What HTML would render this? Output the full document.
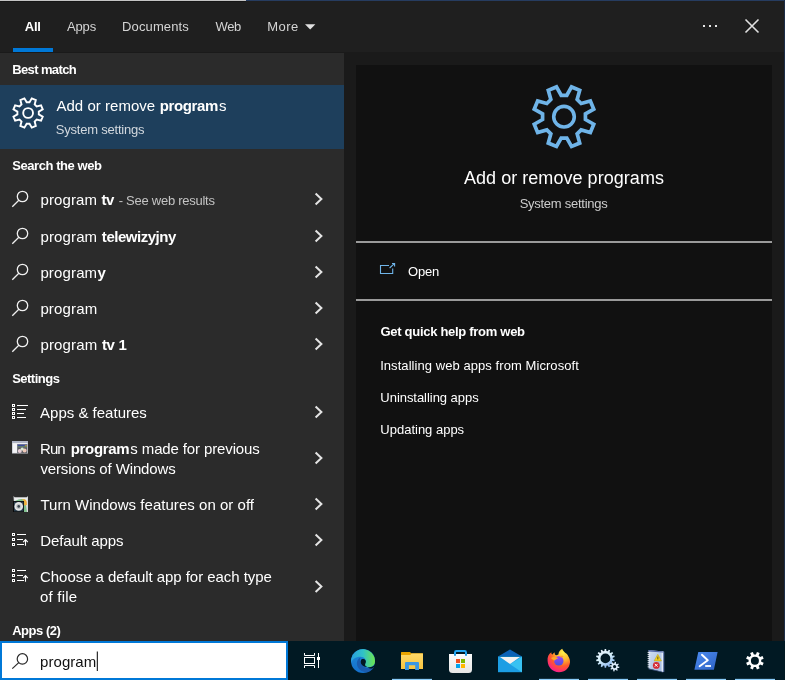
<!DOCTYPE html>
<html lang="en"><head><meta charset="utf-8"><title>Search - program</title>
<style>
html,body{margin:0;padding:0;background:#1a1a1a;}
body{width:785px;height:680px;overflow:hidden;position:relative;font-family:"Liberation Sans", sans-serif;}
.b{position:absolute;}
.t{position:absolute;line-height:20px;white-space:nowrap;}
#tx{position:absolute;left:0;top:0;width:785px;height:680px;will-change:transform;}
.t b{font-weight:700;}
svg{position:absolute;left:0;top:0;}
</style></head><body>
<div class="b" style="left:0;top:0;width:785px;height:641px;background:#1a1a1a"></div>
<div class="b" style="left:0;top:0;width:785px;height:52px;background:#1f1f1f"></div>
<div class="b" style="left:0;top:0;width:246px;height:1px;background:#c4c4c4"></div>
<div class="b" style="left:0;top:1px;width:246px;height:1px;background:#161616"></div>
<div class="b" style="left:246px;top:0;width:539px;height:1px;background:#263c60"></div>
<div class="b" style="left:784px;top:0;width:1px;height:641px;background:#1c2c46"></div>
<div class="b" style="left:13px;top:48px;width:40px;height:4px;background:#0078d7"></div>
<div class="b" style="left:0;top:53px;width:344px;height:588px;background:#2b2b2b"></div>
<div class="b" style="left:0;top:85px;width:344px;height:64px;background:#1e3f5c"></div>
<div class="b" style="left:356px;top:65px;width:416px;height:576px;background:#111111"></div>
<div class="b" style="left:356px;top:241px;width:416px;height:2px;background:#9a9a9a"></div>
<div class="b" style="left:356px;top:299px;width:416px;height:2px;background:#9a9a9a"></div>
<div class="b" style="left:0;top:641px;width:785px;height:39px;background:#011923"></div>
<div class="b" style="left:0;top:641px;width:284px;height:35px;background:#ffffff;border:2px solid #0078d7"></div>
<div id="tx">
<div class="t" style="left:24.85px;top:16.50px;font-size:13px;color:#ffffff"><span class="s" id="t_all" style="letter-spacing:-0.334px;font-weight:700">All</span></div>
<div class="t" style="left:66.90px;top:16.50px;font-size:13px;color:#d4d4d4"><span class="s" id="t_apps" style="letter-spacing:-0.114px">Apps</span></div>
<div class="t" style="left:121.99px;top:16.50px;font-size:13px;color:#d4d4d4"><span class="s" id="t_docs" style="letter-spacing:0.141px">Documents</span></div>
<div class="t" style="left:215.52px;top:16.50px;font-size:13px;color:#d4d4d4"><span class="s" id="t_web" style="letter-spacing:-0.397px">Web</span></div>
<div class="t" style="left:267.18px;top:16.50px;font-size:13px;color:#d4d4d4"><span class="s" id="t_more" style="letter-spacing:0.479px">More</span></div>
<div class="t" style="left:12.27px;top:59.50px;font-size:13px;color:#ffffff"><span class="s" id="t_best" style="letter-spacing:-0.630px;font-weight:700">Best match</span></div>
<div class="t" style="left:56.41px;top:95.80px;font-size:15px;color:#ffffff"><span class="s" id="t_sel1a" style="letter-spacing:0.030px">Add or remove</span> <span class="s" id="t_sel1b" style="letter-spacing:-0.347px;font-weight:700;margin-left:0.30px">program</span><span class="s" id="t_sel1c" style="letter-spacing:0.000px;margin-left:1.03px">s</span></div>
<div class="t" style="left:55.87px;top:119.50px;font-size:13px;color:#d2d8de"><span class="s" id="t_sel2" style="letter-spacing:-0.219px">System settings</span></div>
<div class="t" style="left:12.31px;top:155.50px;font-size:13px;color:#ffffff"><span class="s" id="t_sweb" style="letter-spacing:-0.446px;font-weight:700">Search the web</span></div>
<div class="t" style="left:40.46px;top:189.80px;font-size:15px;color:#ffffff"><span class="s" id="t_r1" style="letter-spacing:0.117px">program</span> <span class="s" id="t_r1t" style="letter-spacing:-0.598px;font-weight:700;margin-left:0.27px">tv</span> <span class="s" id="t_r1b" style="letter-spacing:-0.256px;margin-left:0.74px;font-size:13px;color:#c4c4c4">- See web results</span></div>
<div class="t" style="left:40.46px;top:226.80px;font-size:15px;color:#ffffff"><span class="s" id="t_r2" style="letter-spacing:0.133px">program</span> <span class="s" id="t_r2t" style="letter-spacing:-0.477px;font-weight:700;margin-left:0.44px">telewizyjny</span></div>
<div class="t" style="left:40.39px;top:262.80px;font-size:15px;color:#ffffff"><span class="s" id="t_r3" style="letter-spacing:0.148px">program</span><span class="s" id="t_r3t" style="letter-spacing:0.000px;font-weight:700;margin-left:0.17px">y</span></div>
<div class="t" style="left:40.39px;top:298.80px;font-size:15px;color:#ffffff"><span class="s" id="t_r4" style="letter-spacing:0.149px">program</span></div>
<div class="t" style="left:40.39px;top:334.80px;font-size:15px;color:#ffffff"><span class="s" id="t_r5" style="letter-spacing:0.161px">program</span> <span class="s" id="t_r5t" style="letter-spacing:-0.466px;font-weight:700;margin-left:0.49px">tv</span> <span class="s" id="t_r5u" style="letter-spacing:0.000px;font-weight:700;margin-left:-0.08px">1</span></div>
<div class="t" style="left:12.14px;top:368.50px;font-size:13px;color:#ffffff"><span class="s" id="t_set" style="letter-spacing:-0.496px;font-weight:700">Settings</span></div>
<div class="t" style="left:40.07px;top:402.80px;font-size:15px;color:#ffffff"><span class="s" id="t_s1" style="letter-spacing:0.002px">Apps &amp; features</span></div>
<div class="t" style="left:40.12px;top:438.80px;font-size:15px;color:#ffffff"><span class="s" id="t_s2a" style="letter-spacing:-0.995px">Run</span> <span class="s" id="t_s2p" style="letter-spacing:-0.325px;font-weight:700;margin-left:1.94px">program</span><span class="s" id="t_s2r" style="letter-spacing:-0.127px;margin-left:1.02px">s made for previous</span></div>
<div class="t" style="left:40.39px;top:458.80px;font-size:15px;color:#ffffff"><span class="s" id="t_s2b" style="letter-spacing:-0.120px">versions of Windows</span></div>
<div class="t" style="left:40.45px;top:494.80px;font-size:15px;color:#ffffff"><span class="s" id="t_s3" style="letter-spacing:0.033px">Turn Windows features on or off</span></div>
<div class="t" style="left:40.20px;top:530.80px;font-size:15px;color:#ffffff"><span class="s" id="t_s4" style="letter-spacing:-0.091px">Default apps</span></div>
<div class="t" style="left:40.06px;top:566.80px;font-size:15px;color:#ffffff"><span class="s" id="t_s5a" style="letter-spacing:-0.051px">Choose a default app for each type</span></div>
<div class="t" style="left:40.02px;top:586.80px;font-size:15px;color:#ffffff"><span class="s" id="t_s5b" style="letter-spacing:0.203px">of file</span></div>
<div class="t" style="left:12.17px;top:620.50px;font-size:13px;color:#ffffff"><span class="s" id="t_apps2" style="letter-spacing:-0.461px;font-weight:700">Apps (2)</span></div>
<div class="t" style="left:463.95px;top:167.76px;font-size:18px;color:#ffffff"><span class="s" id="t_title" style="letter-spacing:0.044px">Add or remove programs</span></div>
<div class="t" style="left:519.64px;top:193.50px;font-size:13px;color:#cccccc"><span class="s" id="t_sub" style="letter-spacing:-0.262px">System settings</span></div>
<div class="t" style="left:408.03px;top:261.50px;font-size:13px;color:#ffffff"><span class="s" id="t_open" style="letter-spacing:-0.163px">Open</span></div>
<div class="t" style="left:380.46px;top:321.50px;font-size:13px;color:#ffffff"><span class="s" id="t_help" style="letter-spacing:-0.290px;font-weight:700">Get quick help from web</span></div>
<div class="t" style="left:380.13px;top:355.50px;font-size:13px;color:#ffffff"><span class="s" id="t_h1" style="letter-spacing:0.065px">Installing web apps from Microsoft</span></div>
<div class="t" style="left:380.37px;top:387.50px;font-size:13px;color:#ffffff"><span class="s" id="t_h2" style="letter-spacing:-0.045px">Uninstalling apps</span></div>
<div class="t" style="left:380.37px;top:419.50px;font-size:13px;color:#ffffff"><span class="s" id="t_h3" style="letter-spacing:-0.007px">Updating apps</span></div>
<div class="t" style="left:40.03px;top:651.80px;font-size:15px;color:#111111"><span class="s" id="t_q" style="letter-spacing:0.068px">program</span></div>
</div>
<svg width="785" height="680" viewBox="0 0 785 680">
<path d="M305 24.3 H315.4 L310.2 29.5 Z" fill="#e0e0e0"/>
<rect x="703" y="25" width="2" height="2" fill="#e6e6e6"/>
<rect x="709" y="25" width="2" height="2" fill="#e6e6e6"/>
<rect x="715" y="25" width="2" height="2" fill="#e6e6e6"/>
<path d="M745.5 19.5 L758.5 32.5 M758.5 19.5 L745.5 32.5" stroke="#e0e0e0" stroke-width="1.6" fill="none"/>
<path d="M29.51 102.29 L31.80 98.36 L35.83 100.03 L34.67 104.43 L36.67 106.43 L41.07 105.27 L42.74 109.30 L38.81 111.59 L38.81 114.41 L42.74 116.70 L41.07 120.73 L36.67 119.57 L34.67 121.57 L35.83 125.97 L31.80 127.64 L29.51 123.71 L26.69 123.71 L24.40 127.64 L20.37 125.97 L21.53 121.57 L19.53 119.57 L15.13 120.73 L13.46 116.70 L17.39 114.41 L17.39 111.59 L13.46 109.30 L15.13 105.27 L19.53 106.43 L21.53 104.43 L20.37 100.03 L24.40 98.36 L26.69 102.29 Z" fill="none" stroke="#fff" stroke-width="1.9" stroke-linejoin="miter"/>
<circle cx="28.1" cy="113" r="4.9" fill="none" stroke="#fff" stroke-width="1.9"/>
<circle cx="22.50" cy="196.50" r="5.20" fill="none" stroke="#f0f0f0" stroke-width="1.30"/><path d="M18.82 200.18 L12.30 206.70" stroke="#f0f0f0" stroke-width="1.30" stroke-linecap="butt" fill="none"/>
<path d="M315.6 193.5 L321.4 199.0 L315.6 204.5" fill="none" stroke="#e4e4e4" stroke-width="2" stroke-linejoin="miter"/>
<circle cx="22.50" cy="233.50" r="5.20" fill="none" stroke="#f0f0f0" stroke-width="1.30"/><path d="M18.82 237.18 L12.30 243.70" stroke="#f0f0f0" stroke-width="1.30" stroke-linecap="butt" fill="none"/>
<path d="M315.6 230.5 L321.4 236.0 L315.6 241.5" fill="none" stroke="#e4e4e4" stroke-width="2" stroke-linejoin="miter"/>
<circle cx="22.50" cy="269.50" r="5.20" fill="none" stroke="#f0f0f0" stroke-width="1.30"/><path d="M18.82 273.18 L12.30 279.70" stroke="#f0f0f0" stroke-width="1.30" stroke-linecap="butt" fill="none"/>
<path d="M315.6 266.5 L321.4 272.0 L315.6 277.5" fill="none" stroke="#e4e4e4" stroke-width="2" stroke-linejoin="miter"/>
<circle cx="22.50" cy="305.50" r="5.20" fill="none" stroke="#f0f0f0" stroke-width="1.30"/><path d="M18.82 309.18 L12.30 315.70" stroke="#f0f0f0" stroke-width="1.30" stroke-linecap="butt" fill="none"/>
<path d="M315.6 302.5 L321.4 308.0 L315.6 313.5" fill="none" stroke="#e4e4e4" stroke-width="2" stroke-linejoin="miter"/>
<circle cx="22.50" cy="341.50" r="5.20" fill="none" stroke="#f0f0f0" stroke-width="1.30"/><path d="M18.82 345.18 L12.30 351.70" stroke="#f0f0f0" stroke-width="1.30" stroke-linecap="butt" fill="none"/>
<path d="M315.6 338.5 L321.4 344.0 L315.6 349.5" fill="none" stroke="#e4e4e4" stroke-width="2" stroke-linejoin="miter"/>
<path d="M315.6 406.5 L321.4 412.0 L315.6 417.5" fill="none" stroke="#e4e4e4" stroke-width="2" stroke-linejoin="miter"/>
<path d="M315.6 452.5 L321.4 458.0 L315.6 463.5" fill="none" stroke="#e4e4e4" stroke-width="2" stroke-linejoin="miter"/>
<path d="M315.6 498.5 L321.4 504.0 L315.6 509.5" fill="none" stroke="#e4e4e4" stroke-width="2" stroke-linejoin="miter"/>
<path d="M315.6 534.5 L321.4 540.0 L315.6 545.5" fill="none" stroke="#e4e4e4" stroke-width="2" stroke-linejoin="miter"/>
<path d="M315.6 581.0 L321.4 586.5 L315.6 592.0" fill="none" stroke="#e4e4e4" stroke-width="2" stroke-linejoin="miter"/>
<rect x="12.5" y="404.5" width="2" height="2" fill="none" stroke="#fff" stroke-width="1"/>
<rect x="17" y="405.0" width="11" height="1" fill="#fff"/>
<rect x="12.5" y="408.5" width="2" height="2" fill="none" stroke="#fff" stroke-width="1"/>
<rect x="17" y="409.0" width="9" height="1" fill="#fff"/>
<rect x="12.5" y="412.5" width="2" height="2" fill="none" stroke="#fff" stroke-width="1"/>
<rect x="17" y="413.0" width="7" height="1" fill="#fff"/>
<rect x="12.5" y="416.5" width="2" height="2" fill="none" stroke="#fff" stroke-width="1"/>
<rect x="17" y="417.0" width="9" height="1" fill="#fff"/>
<rect x="12" y="441" width="16" height="12.5" fill="#c9ccd4"/>
<rect x="12.8" y="443.2" width="14.4" height="9.6" fill="#f4f4f6"/>
<rect x="12" y="441" width="16" height="2" fill="#aeb4c4"/>
<rect x="17" y="444" width="10.5" height="9" fill="#8c8f98"/>
<rect x="17.6" y="444.6" width="9.4" height="1.6" fill="#3b4a9a"/>
<rect x="24.8" y="445.4" width="2.2" height="1.2" fill="#e8b020"/>
<rect x="17.6" y="446.4" width="9.4" height="1" fill="#4a7a50"/>
<rect x="17.6" y="447.4" width="9.4" height="5.4" fill="#5a5a60"/>
<circle cx="19.8" cy="451" r="2" fill="#e8d0d8"/>
<circle cx="24.6" cy="450.6" r="2" fill="#f0c8b8"/>
<circle cx="22.2" cy="449" r="1.6" fill="#d8e8d0"/>
<path d="M13.5 496 L15 497.5 H26.5 L28 496 V512 H14.5 Z" fill="#d8dadc"/>
<rect x="14.5" y="497.5" width="12.5" height="3" fill="#eceeee"/>
<path d="M15 501 Q20 498 25 499.5 L27 512 H24 L24 501 Z" fill="#7fbf8c"/>
<path d="M21.5 499.6 Q27.5 497.5 26.8 505 L24.2 505.5 V501 Z" fill="#f5ae36"/>
<rect x="13" y="501" width="11" height="11" fill="#0a0a0a"/>
<rect x="14" y="501.8" width="9.4" height="9.6" fill="#2a3d4c"/>
<circle cx="18.7" cy="506.4" r="4.3" fill="#e4e6e6"/>
<circle cx="18.7" cy="506.4" r="2.6" fill="#c2c6c8"/>
<circle cx="18.7" cy="506.4" r="1.3" fill="#3a4650"/>
<rect x="12.5" y="533.5" width="2" height="2" fill="none" stroke="#fff" stroke-width="1"/><rect x="17" y="534.0" width="9" height="1" fill="#fff"/><rect x="12.5" y="538.5" width="2" height="2" fill="none" stroke="#fff" stroke-width="1"/><rect x="17" y="539.0" width="6" height="1" fill="#fff"/><rect x="12.5" y="543.5" width="2" height="2" fill="none" stroke="#fff" stroke-width="1"/><rect x="17" y="544.0" width="7" height="1" fill="#fff"/><path d="M25.5 545.8 V539.7 M23.2 542.1 L25.5 539.6 L27.8 542.1" fill="none" stroke="#fff" stroke-width="1.1"/>
<rect x="12.5" y="569.5" width="2" height="2" fill="none" stroke="#fff" stroke-width="1"/><rect x="17" y="570.0" width="9" height="1" fill="#fff"/><rect x="12.5" y="574.5" width="2" height="2" fill="none" stroke="#fff" stroke-width="1"/><rect x="17" y="575.0" width="6" height="1" fill="#fff"/><rect x="12.5" y="579.5" width="2" height="2" fill="none" stroke="#fff" stroke-width="1"/><rect x="17" y="580.0" width="7" height="1" fill="#fff"/><path d="M25.5 581.8 V575.7 M23.2 578.1 L25.5 575.6 L27.8 578.1" fill="none" stroke="#fff" stroke-width="1.1"/>
<path d="M566.82 95.28 L571.53 86.94 L579.72 90.33 L577.15 99.56 L581.14 103.55 L590.37 100.98 L593.76 109.17 L585.42 113.88 L585.42 119.52 L593.76 124.23 L590.37 132.42 L581.14 129.85 L577.15 133.84 L579.72 143.07 L571.53 146.46 L566.82 138.12 L561.18 138.12 L556.47 146.46 L548.28 143.07 L550.85 133.84 L546.86 129.85 L537.63 132.42 L534.24 124.23 L542.58 119.52 L542.58 113.88 L534.24 109.17 L537.63 100.98 L546.86 103.55 L550.85 99.56 L548.28 90.33 L556.47 86.94 L561.18 95.28 Z" fill="none" stroke="#6fb4e8" stroke-width="3.7" stroke-linejoin="miter"/>
<circle cx="564" cy="116.7" r="10.3" fill="none" stroke="#6fb4e8" stroke-width="3.6"/>
<path d="M389 265.5 H380.5 V273.5 H392.7 V268.6" fill="none" stroke="#6fb4e8" stroke-width="1.1"/>
<path d="M389.6 268 L394.6 263.4 M392 263.5 H394.6 V266.4" fill="none" stroke="#6fb4e8" stroke-width="1.1"/>
<circle cx="22.40" cy="658.90" r="5.20" fill="none" stroke="#2a2a2a" stroke-width="1.20"/><path d="M18.72 662.58 L12.30 668.60" stroke="#2a2a2a" stroke-width="1.20" stroke-linecap="butt" fill="none"/>
<rect x="96.8" y="651.5" width="1" height="19.5" fill="#000"/>
<rect x="304.5" y="657.5" width="10" height="6" fill="none" stroke="#ffffff" stroke-width="1"/>
<path d="M304.5 653 V655.5 H314.5 V653" fill="none" stroke="#ffffff" stroke-width="1"/>
<path d="M304.5 668 V665.5 H314.5 V668" fill="none" stroke="#ffffff" stroke-width="1"/>
<path d="M318.5 653 V668" fill="none" stroke="#ffffff" stroke-width="1"/>
<rect x="317" y="657" width="3" height="3" fill="#ffffff"/>
<rect x="392" y="678.85" width="40" height="1.15" fill="#8ccdfa"/>
<rect x="539" y="678.85" width="40" height="1.15" fill="#8ccdfa"/>
<rect x="588" y="678.85" width="40" height="1.15" fill="#8ccdfa"/>
<rect x="637" y="678.85" width="40" height="1.15" fill="#8ccdfa"/>
<rect x="686" y="678.85" width="40" height="1.15" fill="#8ccdfa"/>
<rect x="735" y="678.85" width="40" height="1.15" fill="#8ccdfa"/>
<defs>
<linearGradient id="eg1" x1="0" y1="0" x2="1" y2="0"><stop offset="0" stop-color="#2a9fe0"/><stop offset="0.5" stop-color="#30c2c8"/><stop offset="1" stop-color="#6ee64c"/></linearGradient>
<linearGradient id="eg2" x1="0" y1="0" x2="0" y2="1"><stop offset="0" stop-color="#1f8ad8"/><stop offset="1" stop-color="#1470cc"/></linearGradient>
<radialGradient id="ff1" cx="0.7" cy="0.15" r="0.95"><stop offset="0" stop-color="#fff04a"/><stop offset="0.35" stop-color="#ffb52e"/><stop offset="0.62" stop-color="#ff5a2c"/><stop offset="0.85" stop-color="#ff2e6c"/><stop offset="1" stop-color="#e81aa8"/></radialGradient>
<linearGradient id="ffg" x1="0" y1="0" x2="0" y2="1"><stop offset="0" stop-color="#a040ff"/><stop offset="1" stop-color="#4a52d8"/></linearGradient>
<linearGradient id="fo" x1="0" y1="0" x2="0" y2="1"><stop offset="0" stop-color="#ffd968"/><stop offset="1" stop-color="#f8c440"/></linearGradient>
<linearGradient id="ps" x1="0" y1="0" x2="1" y2="1"><stop offset="0" stop-color="#4c8cf0"/><stop offset="1" stop-color="#2e62c4"/></linearGradient>
<linearGradient id="sv" x1="0" y1="0" x2="0.6" y2="1"><stop offset="0" stop-color="#eef2fc"/><stop offset="0.55" stop-color="#d4eef8"/><stop offset="1" stop-color="#8cb8f0"/></linearGradient>
<linearGradient id="bag" x1="0" y1="0" x2="0" y2="1"><stop offset="0" stop-color="#fbfbfb"/><stop offset="1" stop-color="#e6e6e6"/></linearGradient>
<linearGradient id="nb" x1="0" y1="0" x2="1" y2="1"><stop offset="0" stop-color="#d2e0f2"/><stop offset="1" stop-color="#9cb4dc"/></linearGradient>
</defs>
<circle cx="363" cy="661" r="12" fill="url(#eg2)"/>
<path d="M351.2 659 A12 12 0 0 1 375 661 C375 666 371 667.6 367.5 667.2 C364.5 666.8 364 664.5 365 663 C367 660 364.5 656.8 360.5 656.8 C355.5 656.8 352 659.5 351.2 663 Z" fill="url(#eg1)"/>
<path d="M360.5 657.5 C356.8 659 355.8 664 358.2 667.8 C360.5 671.5 365.5 673.6 370 671.2 C372.2 670 373.6 668.2 374.2 666.6 C371 668.6 366.4 668.6 363.6 666.6 C360.2 664.2 359.4 660.4 360.5 657.5 Z" fill="#1a5cae"/>
<path d="M361.5 659.3 C364.5 658.2 366.8 660.4 365.6 662.9 C364.6 664.6 365 666.2 367.4 667 C365 667.4 362 666 361 663.6 C360.4 662 360.6 660.4 361.5 659.3 Z" fill="#021822"/>
<path d="M367.4 667 C370.5 667.8 373.5 666.8 374.6 664.6 C374.4 666 373.8 667.2 373.2 668 C371 669 368.5 668.4 367.4 667 Z" fill="#021822"/>
<path d="M401 652.6 Q401 652 401.6 652 H410 L411.2 653.2 H422.4 Q423 653.2 423 653.8 V669 H401 Z" fill="#e9a400"/>
<path d="M401 655 H410.4 L411.4 653.4 H423 V669 H401 Z" fill="url(#fo)"/>
<path d="M405 663 Q405 662 406 662 H418 Q419 662 419 663 V670 H415.2 V665.3 H408.9 V670 H405 Z" fill="#3b97e3"/>
<path d="M455 655.5 V652.4 Q455 651 456.4 651 H464.6 Q466 651 466 652.4 V655.5" fill="none" stroke="#22a6f2" stroke-width="2"/>
<path d="M449 654 H472 V669.5 Q472 673 468.5 673 H452.5 Q449 673 449 669.5 Z" fill="url(#bag)"/>
<path d="M455 654 V655.8 M466 654 V655.8" stroke="#1c9be6" stroke-width="2" fill="none"/>
<rect x="456" y="659" width="4" height="4" fill="#f04e1f"/>
<rect x="461" y="659" width="4" height="4" fill="#7eb900"/>
<rect x="456" y="664" width="4" height="4" fill="#00a3ee"/>
<rect x="461" y="664" width="4" height="4" fill="#ffb800"/>
<path d="M498 656.6 L510 649.4 L522 656.6 Z" fill="#0b62b6"/>
<rect x="498" y="656.4" width="24" height="15.8" fill="#1c9ee4"/>
<path d="M510 664.2 L522 656.8 V672.2 Z" fill="#38c2f2"/>
<path d="M500 657 H520 L510 664 Z" fill="#f4f2f0"/>
<path d="M547.6 661 C547.2 657 548.6 654 551.4 652.2 C551.2 653.4 551.6 654.2 552.6 654.6 C553 653.4 553.8 652.6 554.8 652.4 C554.4 653.8 555 654.8 556.4 655.2 L558.4 654.6 C558.6 651.6 560.2 649.8 562.2 648.8 C563 651 564.6 652.4 566.6 653.8 C567.4 654.6 568 655.4 568.4 656.4 C569.6 658.4 570.2 660.4 570 662.4 C569.4 668 565 672.2 559 672.2 C552.6 672.2 548 667.4 547.6 661 Z" fill="url(#ff1)"/>
<circle cx="558.8" cy="660.9" r="4.7" fill="url(#ffg)"/>
<path d="M551 658 C553 656.6 556 656.8 558.2 658.2 C556.8 658.6 555.4 659.6 554.6 660.6 C553.6 660 552 659.4 551 658 Z" fill="#ffa828"/>
<path d="M560 656 C562 655.4 563.4 656 564 656.6 C562.8 656.6 561.6 657.2 561 658 Z" fill="#ff9a30"/>
<path d="M604.39 651.07 L604.66 649.03 L606.14 649.03 L606.41 651.07 L607.67 651.36 L608.80 649.64 L610.13 650.28 L609.49 652.23 L610.50 653.04 L612.27 651.98 L613.19 653.13 L611.76 654.62 L612.32 655.78 L614.37 655.60 L614.70 657.03 L612.77 657.76 L612.77 659.04 L614.70 659.77 L614.37 661.20 L612.32 661.02 L611.76 662.18 L613.19 663.67 L612.27 664.82 L610.50 663.76 L609.49 664.57 L610.13 666.52 L608.80 667.16 L607.67 665.44 L606.41 665.73 L606.14 667.77 L604.66 667.77 L604.39 665.73 L603.13 665.44 L602.00 667.16 L600.67 666.52 L601.31 664.57 L600.30 663.76 L598.53 664.82 L597.61 663.67 L599.04 662.18 L598.48 661.02 L596.43 661.20 L596.10 659.77 L598.03 659.04 L598.03 657.76 L596.10 657.03 L596.43 655.60 L598.48 655.78 L599.04 654.62 L597.61 653.13 L598.53 651.98 L600.30 653.04 L601.31 652.23 L600.67 650.28 L602.00 649.64 L603.13 651.36 Z M610.3 658.4 A4.9 4.9 0 1 0 600.5 658.4 A4.9 4.9 0 1 0 610.3 658.4 Z" fill="url(#sv)" fill-rule="evenodd"/>
<path d="M614.40 663.31 L614.85 661.81 L616.00 662.01 L615.92 663.57 L616.79 664.13 L618.17 663.39 L618.84 664.35 L617.67 665.39 L617.89 666.40 L619.39 666.85 L619.19 668.00 L617.63 667.92 L617.07 668.79 L617.81 670.17 L616.85 670.84 L615.81 669.67 L614.80 669.89 L614.35 671.39 L613.20 671.19 L613.28 669.63 L612.41 669.07 L611.03 669.81 L610.36 668.85 L611.53 667.81 L611.31 666.80 L609.81 666.35 L610.01 665.20 L611.57 665.28 L612.13 664.41 L611.39 663.03 L612.35 662.36 L613.39 663.53 Z M616.2 666.6 A1.6 1.6 0 1 0 613 666.6 A1.6 1.6 0 1 0 616.2 666.6 Z" fill="#dceaf8" fill-rule="evenodd"/>
<path d="M648.6 650 L663.2 651.4 Q664 651.5 664 652.4 V671.2 Q664 672.2 663 672 L648.6 668.6 Z" fill="url(#nb)"/>
<path d="M661.6 651.3 L663.2 651.5 V671.9 L661.6 671.6 Z" fill="#e2eaf6"/>
<path d="M663.2 651.5 L664.3 651.7 V672.1 L663.2 671.9 Z" fill="#56699c"/>
<path d="M648.6 668.6 L663.2 672 L663.2 672.6 L648.6 669.3 Z" fill="#4a5c8c"/>
<path d="M648.6 650 L663 651.4 V652.6 L648.6 651.4 Z" fill="#5064a8"/>
<rect x="647.6" y="652.0" width="2.6" height="0.9" fill="#e8ecf4"/>
<rect x="647.6" y="654.0" width="2.6" height="0.9" fill="#e8ecf4"/>
<rect x="647.6" y="656.1" width="2.6" height="0.9" fill="#e8ecf4"/>
<rect x="647.6" y="658.1" width="2.6" height="0.9" fill="#e8ecf4"/>
<rect x="647.6" y="660.2" width="2.6" height="0.9" fill="#e8ecf4"/>
<rect x="647.6" y="662.2" width="2.6" height="0.9" fill="#e8ecf4"/>
<rect x="647.6" y="664.3" width="2.6" height="0.9" fill="#e8ecf4"/>
<rect x="647.6" y="666.4" width="2.6" height="0.9" fill="#e8ecf4"/>
<path d="M657.8 654.3 L661.5 660.9 H654.1 Z" fill="#f2d21c" stroke="#b89a10" stroke-width="0.5"/>
<rect x="657.4" y="656.6" width="0.9" height="2.8" fill="#5a4a10"/>
<circle cx="656.3" cy="665.4" r="3.4" fill="#d42a32"/>
<path d="M654.8 663.9 L657.6 666.7 M657.6 663.9 L654.8 666.7" stroke="#fff" stroke-width="1" fill="none"/>
<path d="M698.3 652 H717.6 L713.9 669.7 H694.4 Z" fill="url(#ps)"/>
<path d="M701.9 654.8 L707.8 660.2 L699.6 666.2" fill="none" stroke="#fff" stroke-width="1.9" stroke-linecap="round" stroke-linejoin="round"/>
<rect x="705.2" y="665.1" width="5.8" height="1.8" fill="#fff"/>
<path d="M755.96 654.39 L756.92 651.93 L759.67 653.07 L758.62 655.49 L760.11 656.98 L762.53 655.93 L763.67 658.68 L761.21 659.64 L761.21 661.76 L763.67 662.72 L762.53 665.47 L760.11 664.42 L758.62 665.91 L759.67 668.33 L756.92 669.47 L755.96 667.01 L753.84 667.01 L752.88 669.47 L750.13 668.33 L751.18 665.91 L749.69 664.42 L747.27 665.47 L746.13 662.72 L748.59 661.76 L748.59 659.64 L746.13 658.68 L747.27 655.93 L749.69 656.98 L751.18 655.49 L750.13 653.07 L752.88 651.93 L753.84 654.39 Z M758.9 660.7 A4 4 0 1 0 750.9 660.7 A4 4 0 1 0 758.9 660.7 Z" fill="#fff" fill-rule="evenodd"/>
</svg>
</body></html>
